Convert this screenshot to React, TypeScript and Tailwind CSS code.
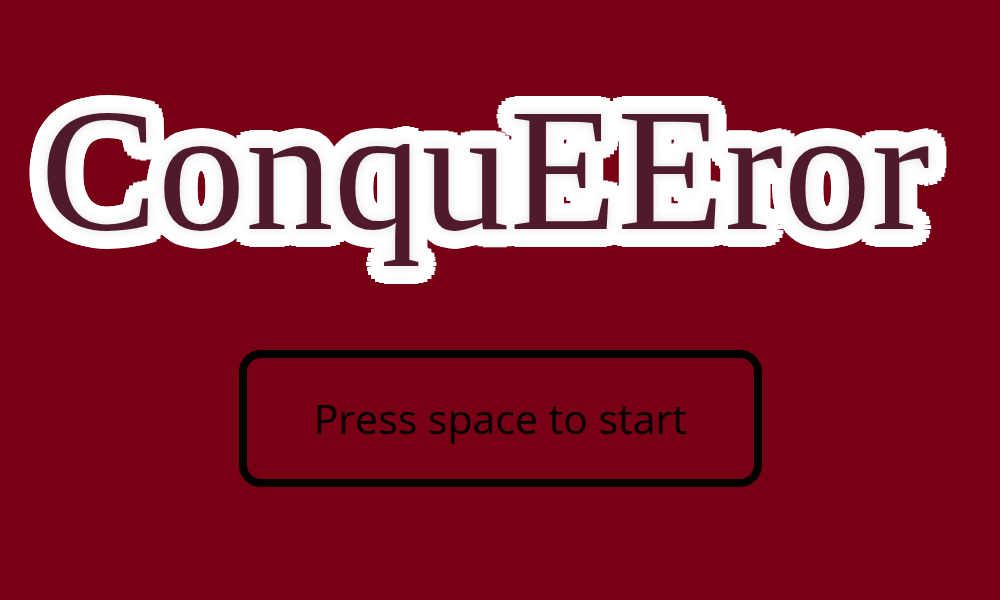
export default function App() {
  return (
    <div className="flex h-[600px] w-[1000px] flex-col items-center bg-[#780014]">
      <div
        className="mt-[70px] pr-[30px] font-['Liberation_Serif',serif] text-[176px] font-normal leading-[200px] text-[#4e1a2c] [text-shadow:0_0_9px_rgba(150,140,165,0.3),0_0_0_#fff,10px_0_0_#fff,7px_7px_0_#fff,0_10px_0_#fff,-7px_7px_0_#fff,-10px_0_0_#fff,-7px_-7px_0_#fff,0_-10px_0_#fff,7px_-7px_0_#fff,18px_0_0_#fff,17px_5px_0_#fff,16px_9px_0_#fff,13px_13px_0_#fff,9px_16px_0_#fff,5px_17px_0_#fff,0_18px_0_#fff,-5px_17px_0_#fff,-9px_16px_0_#fff,-13px_13px_0_#fff,-16px_9px_0_#fff,-17px_5px_0_#fff,-18px_0_0_#fff,-17px_-5px_0_#fff,-16px_-9px_0_#fff,-13px_-13px_0_#fff,-9px_-16px_0_#fff,-5px_-17px_0_#fff,0_-18px_0_#fff,5px_-17px_0_#fff,9px_-16px_0_#fff,13px_-13px_0_#fff,16px_-9px_0_#fff,17px_-5px_0_#fff]"
      >
        ConquEEror
      </div>
      <div className="mt-[80px] flex h-[137px] w-[523px] items-center justify-center rounded-[22px] border-[8px] border-black">
        <span className="font-['Open_Sans',sans-serif] text-[41px] text-black">Press space to start</span>
      </div>
    </div>
  );
}
